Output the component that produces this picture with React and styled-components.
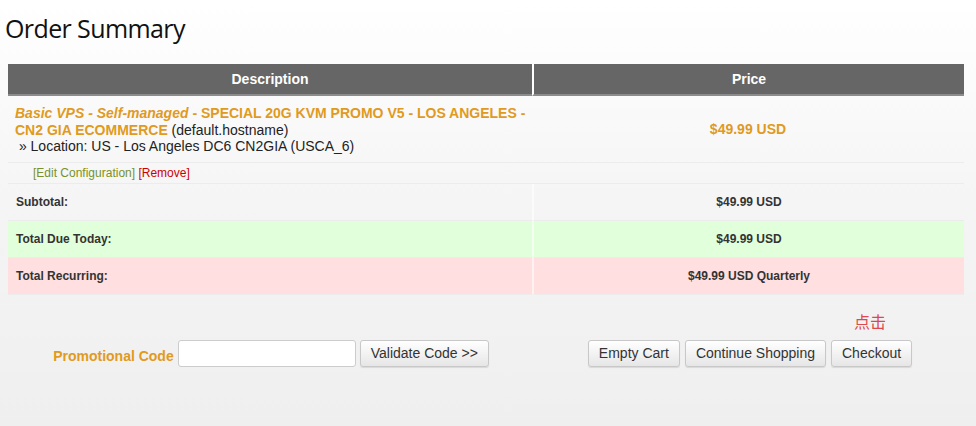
import styled, { createGlobalStyle } from "styled-components";

const GlobalStyle = createGlobalStyle`
  html, body {
    margin: 0;
    padding: 0;
  }
  body {
    min-height: 426px;
    background: linear-gradient(to bottom, #ffffff 0px, #f5f5f5 200px, #efefef 426px);
    font-family: "Liberation Sans", Arial, sans-serif;
    color: #333;
  }
`;

const orange = "#e09a1f";

function App() {
  return (
    <>
      <GlobalStyle />
      <Page>
        <Title>Order Summary</Title>
        <Cart>
          <thead>
            <tr>
              <HeadCell $width="524px">Description</HeadCell>
              <HeadCell>Price</HeadCell>
            </tr>
          </thead>
          <tbody>
            <ItemRow>
              <ItemCell>
                <ProductName>
                  <em>Basic VPS - Self-managed</em> - SPECIAL 20G KVM PROMO V5 -
                  LOS ANGELES - CN2 GIA ECOMMERCE
                </ProductName>{" "}
                (default.hostname)
                <br />
                &nbsp;» Location: US - Los Angeles DC6 CN2GIA (USCA_6)
              </ItemCell>
              <PriceCell $tone="item">$49.99 USD</PriceCell>
            </ItemRow>
            <ItemRow>
              <LinksCell>
                <EditLink>[Edit Configuration]</EditLink>{" "}
                <RemoveLink>[Remove]</RemoveLink>
              </LinksCell>
              <LinksCell />
            </ItemRow>
            <TotalRow $bg="transparent">
              <LabelCell>Subtotal:</LabelCell>
              <PriceCell>$49.99 USD</PriceCell>
            </TotalRow>
            <TotalRow $bg="#e2ffdb">
              <LabelCell>Total Due Today:</LabelCell>
              <PriceCell>$49.99 USD</PriceCell>
            </TotalRow>
            <TotalRow $bg="#ffdfdf">
              <LabelCell>Total Recurring:</LabelCell>
              <PriceCell>$49.99 USD Quarterly</PriceCell>
            </TotalRow>
          </tbody>
        </Cart>
        <Actions>
          <PromoForm>
            <PromoLabel>Promotional Code</PromoLabel>
            <PromoInput type="text" />
            <Button>Validate Code &gt;&gt;</Button>
          </PromoForm>
          <CartButtons>
            <Button>Empty Cart</Button>
            <Button>Continue Shopping</Button>
            <CheckoutWrap>
              <Hint>点击</Hint>
              <Button>Checkout</Button>
            </CheckoutWrap>
          </CartButtons>
        </Actions>
      </Page>
    </>
  );
}

export default App;

const Page = styled.div`
  padding: 10px 12px 0 8px;
`;

const Title = styled.h1`
  margin: 0 0 17px -3px;
  font-family: "Open Sans", "Noto Sans", sans-serif;
  font-weight: 400;
  font-size: 25px;
  line-height: 37px;
  letter-spacing: -0.6px;
  color: #111;
`;

const Cart = styled.table`
  width: 956px;
  border-collapse: separate;
  border-spacing: 0;
  table-layout: fixed;
  font-size: 14px;
`;

const HeadCell = styled.th`
  width: ${(p) => p.$width || "auto"};
  height: 30px;
  padding: 0;
  background: #666;
  border-bottom: 2px solid #8c8c8c;
  border-left: 2px solid #fff;
  color: #fff;
  font-weight: bold;
  font-size: 14px;
  text-align: center;
  &:first-child {
    border-left: 0;
  }
`;

const ItemRow = styled.tr`
  & > td {
    border-bottom: 1px solid #ececec;
  }
`;

const ItemCell = styled.td`
  padding: 9px 2px 7px 7px;
  vertical-align: top;
  line-height: 16.5px;
  color: #222;
`;

const ProductName = styled.strong`
  color: ${orange};
  em {
    font-style: italic;
  }
`;

const LinksCell = styled.td`
  padding: 0 0 0 25px;
  font-size: 12px;
  line-height: 20px;
`;

const EditLink = styled.span`
  color: #789229;
`;

const RemoveLink = styled.span`
  color: #cc0000;
`;

const TotalRow = styled.tr`
  background: ${(p) => p.$bg};
  & > td {
    height: 36px;
    border-bottom: 1px solid #ececec;
  }
  & > td + td {
    border-left: 2px solid rgba(255, 255, 255, 0.6);
  }
`;

const LabelCell = styled.td`
  padding: 0 8px;
  font-size: 12px;
  font-weight: bold;
  color: #333;
`;

const PriceCell = styled.td`
  text-align: center;
  padding: 0;
  font-weight: bold;
  font-size: ${(p) => (p.$tone === "item" ? "14px" : "12px")};
  color: ${(p) => (p.$tone === "item" ? orange : "#333")};
`;

const Actions = styled.div`
  display: grid;
  grid-template-columns: 526px 430px;
  align-items: end;
  margin-top: 16px;
`;

const PromoForm = styled.div`
  display: flex;
  align-items: center;
  justify-content: center;
  gap: 4px;
`;

const PromoLabel = styled.span`
  color: ${orange};
  font-weight: bold;
  font-size: 14px;
  margin-top: 6px;
`;

const PromoInput = styled.input`
  box-sizing: border-box;
  width: 178px;
  height: 27px;
  margin: 0;
  border: 1px solid #ccc;
  border-radius: 3px;
  background: #fff;
`;

const Button = styled.button`
  box-sizing: border-box;
  height: 27px;
  margin: 0;
  padding: 0 10px;
  border: 1px solid #c8c8c8;
  border-radius: 3px;
  background: linear-gradient(to bottom, #ffffff, #e6e6e6);
  box-shadow: 0 1px 1px rgba(0, 0, 0, 0.1);
  font-family: "Liberation Sans", Arial, sans-serif;
  font-size: 14px;
  color: #333;
`;

const CartButtons = styled.div`
  display: flex;
  align-items: flex-end;
  justify-content: center;
  gap: 5px;
  padding-left: 2px;
`;

const CheckoutWrap = styled.div`
  display: flex;
  flex-direction: column;
  align-items: center;
`;

const Hint = styled.span`
  font-family: "Noto Sans CJK SC", sans-serif;
  font-size: 16px;
  line-height: 20px;
  color: #e0474c;
  margin: 0 0 9px -3px;
`;
